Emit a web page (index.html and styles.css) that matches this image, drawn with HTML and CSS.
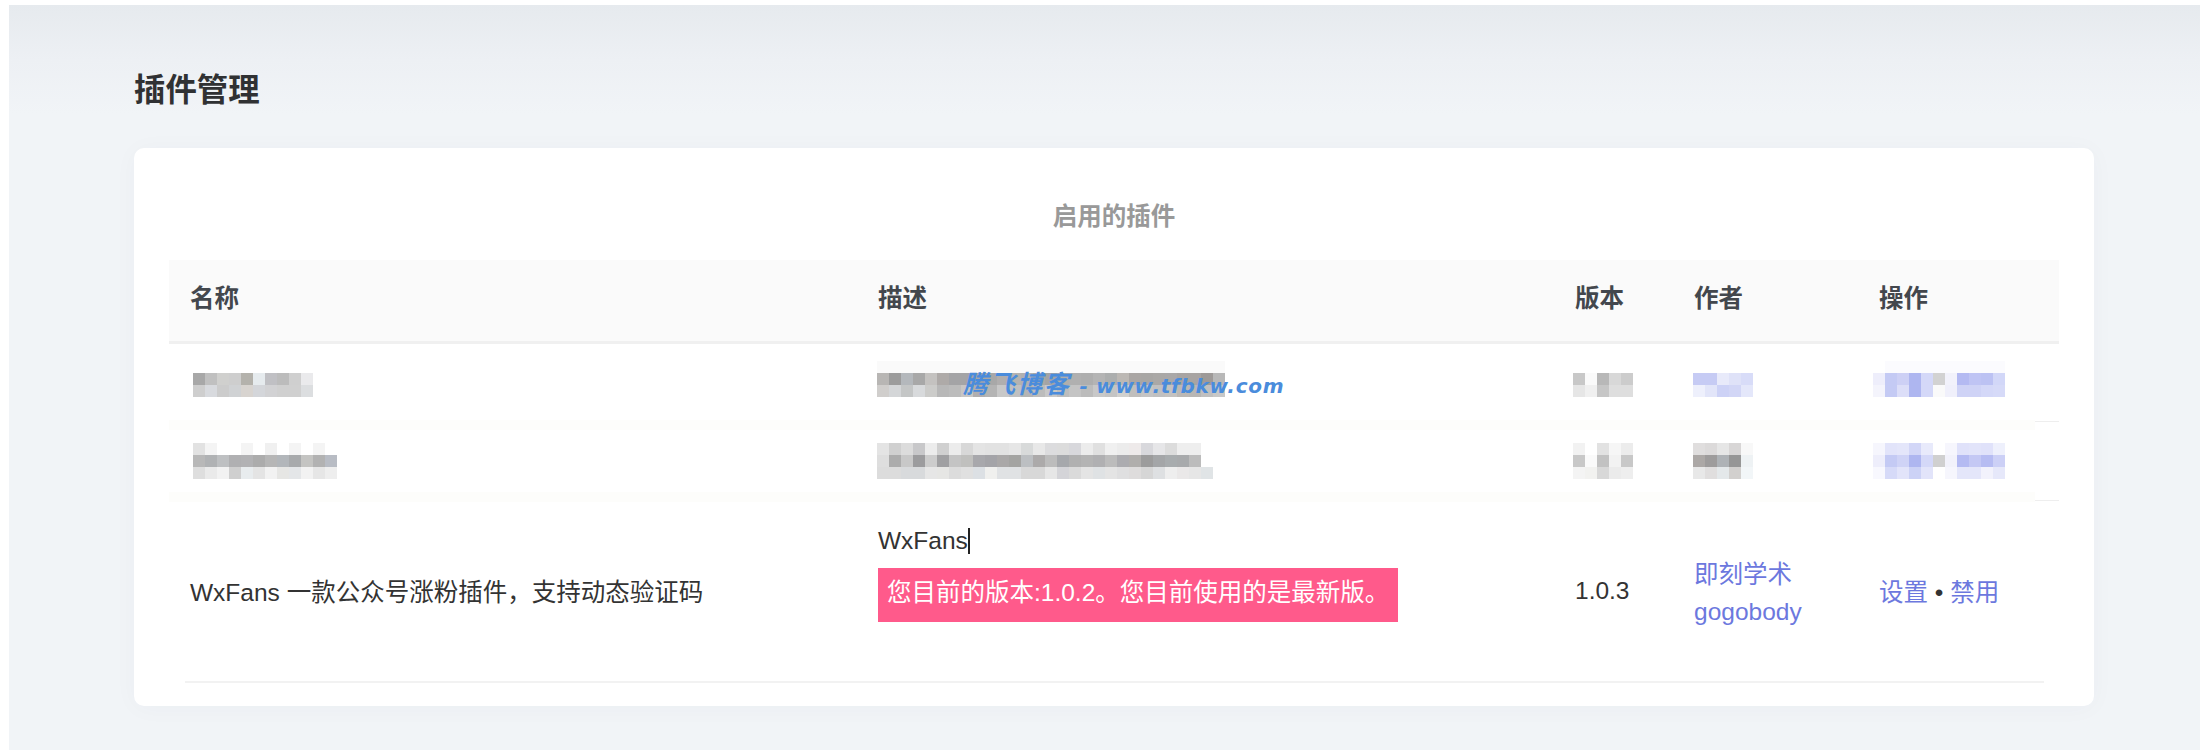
FILE: index.html
```html
<!DOCTYPE html>
<html lang="zh-CN">
<head>
<meta charset="utf-8">
<title>插件管理</title>
<link rel="stylesheet" href="styles.css">
</head>
<body>
<main class="page">
  <h1 class="page-title">插件管理</h1>
  <section class="card">
    <div class="watermark"><span class="wm-cn">腾飞博客</span> <span class="wm-en">- www.tfbkw.com</span></div>
    <table class="plugins">
      <caption>启用的插件</caption>
      <colgroup>
        <col class="col-name"><col class="col-desc"><col class="col-ver"><col class="col-author"><col class="col-ops">
      </colgroup>
      <thead>
        <tr><th>名称</th><th>描述</th><th>版本</th><th>作者</th><th>操作</th></tr>
      </thead>
      <tbody>
        <tr class="row-one">
          <td><svg class="mosaic m-name" width="120" height="36" viewBox="0 0 10 3"><g transform="translate(0,1)"><rect x="0" width="1" height="1" fill="#a8a8a8"/><rect x="1" width="1" height="1" fill="#c0c0c0"/><rect x="2" width="1" height="1" fill="#d0d0ce"/><rect x="3" width="1" height="1" fill="#cecece"/><rect x="4" width="1" height="1" fill="#b4b2ac"/><rect x="5" width="1" height="1" fill="#e6ebee"/><rect x="6" width="1" height="1" fill="#c0c0c4"/><rect x="7" width="1" height="1" fill="#bcbcbc"/><rect x="8" width="1" height="1" fill="#cfcfcf"/><rect x="9" width="1" height="1" fill="#eaeaec"/></g><g transform="translate(0,2)"><rect x="0" width="1" height="1" fill="#cecece"/><rect x="1" width="1" height="1" fill="#d8dade"/><rect x="2" width="1" height="1" fill="#cccccc"/><rect x="3" width="1" height="1" fill="#d0d2d4"/><rect x="4" width="1" height="1" fill="#d8d4d0"/><rect x="5" width="1" height="1" fill="#d4d6da"/><rect x="6" width="1" height="1" fill="#d2d2d4"/><rect x="7" width="1" height="1" fill="#d0d0d0"/><rect x="8" width="1" height="1" fill="#d0d0d0"/><rect x="9" width="1" height="1" fill="#dcdee0"/></g></svg></td>
          <td><svg class="mosaic m-desc" width="348" height="36" viewBox="0 0 29 3"><rect width="29" height="1" fill="#fafafa"/><g transform="translate(0,1)"><rect x="0" width="1" height="1" fill="#b8b6b4"/><rect x="1" width="1" height="1" fill="#9c9c9c"/><rect x="2" width="1" height="1" fill="#b4b8bc"/><rect x="3" width="1" height="1" fill="#a8a8a8"/><rect x="4" width="1" height="1" fill="#c4c2c0"/><rect x="5" width="1" height="1" fill="#aeaaa8"/><rect x="6" width="1" height="1" fill="#a4a4a6"/><rect x="7" width="1" height="1" fill="#a4a4a6"/><rect x="8" width="1" height="1" fill="#a8a6a6"/><rect x="9" width="1" height="1" fill="#a8a8a8"/><rect x="10" width="1" height="1" fill="#b0aeae"/><rect x="11" width="1" height="1" fill="#b4b2b0"/><rect x="12" width="1" height="1" fill="#b0b0b0"/><rect x="13" width="1" height="1" fill="#a8a8a8"/><rect x="14" width="1" height="1" fill="#a4a4a4"/><rect x="15" width="1" height="1" fill="#b0aeac"/><rect x="16" width="1" height="1" fill="#b0b0b0"/><rect x="17" width="1" height="1" fill="#aeaeae"/><rect x="18" width="1" height="1" fill="#b4b4b4"/><rect x="19" width="1" height="1" fill="#acaeae"/><rect x="20" width="1" height="1" fill="#bcb8b4"/><rect x="21" width="1" height="1" fill="#aaa6a4"/><rect x="22" width="1" height="1" fill="#a8a6a4"/><rect x="23" width="1" height="1" fill="#aaa8a6"/><rect x="24" width="1" height="1" fill="#aaa8a8"/><rect x="25" width="1" height="1" fill="#a8a4a2"/><rect x="26" width="1" height="1" fill="#a8a4a2"/><rect x="27" width="1" height="1" fill="#9e9a98"/><rect x="28" width="1" height="1" fill="#b8b8b8"/></g><g transform="translate(0,2)"><rect x="0" width="1" height="1" fill="#d0cecc"/><rect x="1" width="1" height="1" fill="#d4d6d8"/><rect x="2" width="1" height="1" fill="#c4c6c6"/><rect x="3" width="1" height="1" fill="#d8dadc"/><rect x="4" width="1" height="1" fill="#ccccca"/><rect x="5" width="1" height="1" fill="#b8b8b8"/><rect x="6" width="1" height="1" fill="#bcbcbc"/><rect x="7" width="1" height="1" fill="#c8c6c4"/><rect x="8" width="1" height="1" fill="#b0aeae"/><rect x="9" width="1" height="1" fill="#b4b4b4"/><rect x="10" width="1" height="1" fill="#c8c8c8"/><rect x="11" width="1" height="1" fill="#c0c0c0"/><rect x="12" width="1" height="1" fill="#b4b4b4"/><rect x="13" width="1" height="1" fill="#bcbcbc"/><rect x="14" width="1" height="1" fill="#c8c8c8"/><rect x="15" width="1" height="1" fill="#bdbdbd"/><rect x="16" width="1" height="1" fill="#c4c4c4"/><rect x="17" width="1" height="1" fill="#bcbcbc"/><rect x="18" width="1" height="1" fill="#c8c8c8"/><rect x="19" width="1" height="1" fill="#c4c4c4"/><rect x="20" width="1" height="1" fill="#d0d0ce"/><rect x="21" width="1" height="1" fill="#c0bebc"/><rect x="22" width="1" height="1" fill="#c4c4c4"/><rect x="23" width="1" height="1" fill="#c0c0c0"/><rect x="24" width="1" height="1" fill="#c4c2c0"/><rect x="25" width="1" height="1" fill="#bcb8b4"/><rect x="26" width="1" height="1" fill="#b8b6b4"/><rect x="27" width="1" height="1" fill="#c0c0c0"/><rect x="28" width="1" height="1" fill="#c8c8c8"/></g></svg></td>
          <td><svg class="mosaic m-ver" width="60" height="36" viewBox="0 0 5 3"><g transform="translate(0,1)"><rect x="0" width="1" height="1" fill="#c8c8c8"/><rect x="1" width="1" height="1" fill="#fafafa"/><rect x="2" width="1" height="1" fill="#b8b8b8"/><rect x="3" width="1" height="1" fill="#d8d8d8"/><rect x="4" width="1" height="1" fill="#cccccc"/></g><g transform="translate(0,2)"><rect x="0" width="1" height="1" fill="#e6e6e6"/><rect x="1" width="1" height="1" fill="#f0f0f0"/><rect x="2" width="1" height="1" fill="#c6c6c6"/><rect x="3" width="1" height="1" fill="#dedede"/><rect x="4" width="1" height="1" fill="#dedede"/></g></svg></td>
          <td><svg class="mosaic m-author" width="60" height="36" viewBox="0 0 5 3"><g transform="translate(0,1)"><rect x="0" width="1" height="1" fill="#c6cbf4"/><rect x="1" width="1" height="1" fill="#c6cbf4"/><rect x="2" width="1" height="1" fill="#e8eafa"/><rect x="3" width="1" height="1" fill="#dfe2f8"/><rect x="4" width="1" height="1" fill="#d8dcf8"/></g><g transform="translate(0,2)"><rect x="0" width="1" height="1" fill="#eef0fc"/><rect x="1" width="1" height="1" fill="#e2e5f9"/><rect x="2" width="1" height="1" fill="#cdd2f6"/><rect x="3" width="1" height="1" fill="#d2d6f6"/><rect x="4" width="1" height="1" fill="#e4e7fa"/></g></svg></td>
          <td><svg class="mosaic m-ops" width="132" height="36" viewBox="0 0 11 3"><rect x="1" width="10" height="1" fill="#fbfbfe"/><g transform="translate(0,1)"><rect x="0" width="1" height="1" fill="#eeeefb"/><rect x="1" width="1" height="1" fill="#c4caf4"/><rect x="2" width="1" height="1" fill="#cdd0f5"/><rect x="3" width="1" height="1" fill="#aeb6f0"/><rect x="4" width="1" height="1" fill="#d4d8f8"/><rect x="5" width="1" height="1" fill="#d2d2d2"/><rect x="6" width="1" height="1" fill="#f2f2fb"/><rect x="7" width="1" height="1" fill="#b4baf2"/><rect x="8" width="1" height="1" fill="#bfc4f4"/><rect x="9" width="1" height="1" fill="#bcc2f3"/><rect x="10" width="1" height="1" fill="#d2d7f8"/></g><g transform="translate(0,2)"><rect x="0" width="1" height="1" fill="#f4f4fc"/><rect x="1" width="1" height="1" fill="#c4caf4"/><rect x="2" width="1" height="1" fill="#dcdef8"/><rect x="3" width="1" height="1" fill="#aeb6f0"/><rect x="4" width="1" height="1" fill="#d4d8f8"/><rect x="5" width="1" height="1" fill="#fafafa"/><rect x="6" width="1" height="1" fill="#f0f0fb"/><rect x="7" width="1" height="1" fill="#cfd3f6"/><rect x="8" width="1" height="1" fill="#cfd3f6"/><rect x="9" width="1" height="1" fill="#d4d8f8"/><rect x="10" width="1" height="1" fill="#d6daf8"/></g></svg></td>
        </tr>
        <tr class="band band-first"><td colspan="5"></td></tr>
        <tr class="row-two">
          <td><svg class="mosaic m-name" width="144" height="36" viewBox="0 0 12 3"><rect x="0" width="1" height="1" fill="#e2e2e2"/><rect x="1" width="1" height="1" fill="#f4f4f4"/><rect x="4" width="1" height="1" fill="#f4f4f4"/><rect x="6" width="1" height="1" fill="#f0f0f0"/><rect x="8" width="1" height="1" fill="#f4f4f4"/><rect x="10" width="1" height="1" fill="#f4f4f4"/><g transform="translate(0,1)"><rect x="0" width="1" height="1" fill="#b8b8b8"/><rect x="1" width="1" height="1" fill="#b0b2b4"/><rect x="2" width="1" height="1" fill="#bec0c2"/><rect x="3" width="1" height="1" fill="#b0b0b2"/><rect x="4" width="1" height="1" fill="#b2b2b4"/><rect x="5" width="1" height="1" fill="#acacac"/><rect x="6" width="1" height="1" fill="#b6b6b6"/><rect x="7" width="1" height="1" fill="#b2b6ba"/><rect x="8" width="1" height="1" fill="#a8aaac"/><rect x="9" width="1" height="1" fill="#c4c4c2"/><rect x="10" width="1" height="1" fill="#b2b2b2"/><rect x="11" width="1" height="1" fill="#b8bcc4"/></g><g transform="translate(0,2)"><rect x="0" width="1" height="1" fill="#dedede"/><rect x="1" width="1" height="1" fill="#eaeaea"/><rect x="2" width="1" height="1" fill="#f2f2f2"/><rect x="3" width="1" height="1" fill="#cfcfcf"/><rect x="4" width="1" height="1" fill="#e8ecee"/><rect x="5" width="1" height="1" fill="#e4e4e4"/><rect x="6" width="1" height="1" fill="#f2f2f2"/><rect x="7" width="1" height="1" fill="#e6e6e4"/><rect x="8" width="1" height="1" fill="#e4e6e8"/><rect x="9" width="1" height="1" fill="#f2f2f2"/><rect x="10" width="1" height="1" fill="#e6e6e6"/><rect x="11" width="1" height="1" fill="#eeeeee"/></g></svg></td>
          <td><svg class="mosaic m-desc" width="336" height="36" viewBox="0 0 28 3"><rect x="0" width="1" height="1" fill="#e4e4e4"/><rect x="1" width="1" height="1" fill="#d0d0d0"/><rect x="2" width="1" height="1" fill="#dcdcdc"/><rect x="3" width="1" height="1" fill="#c8c8ca"/><rect x="4" width="1" height="1" fill="#ececec"/><rect x="5" width="1" height="1" fill="#d0d0d0"/><rect x="6" width="1" height="1" fill="#ececec"/><rect x="7" width="1" height="1" fill="#d8d8d8"/><rect x="8" width="1" height="1" fill="#e4e4e4"/><rect x="9" width="1" height="1" fill="#e2e2e2"/><rect x="10" width="1" height="1" fill="#e2e2e2"/><rect x="11" width="1" height="1" fill="#e6e6e6"/><rect x="12" width="1" height="1" fill="#d8dada"/><rect x="13" width="1" height="1" fill="#e8e8e8"/><rect x="14" width="1" height="1" fill="#dcdcde"/><rect x="15" width="1" height="1" fill="#dcdcdc"/><rect x="16" width="1" height="1" fill="#d8d8dc"/><rect x="17" width="1" height="1" fill="#ececec"/><rect x="18" width="1" height="1" fill="#e0e0e0"/><rect x="19" width="1" height="1" fill="#f0f0f0"/><rect x="20" width="1" height="1" fill="#ececec"/><rect x="21" width="1" height="1" fill="#eeeaea"/><rect x="22" width="1" height="1" fill="#d8d8dc"/><rect x="23" width="1" height="1" fill="#e6e6e8"/><rect x="24" width="1" height="1" fill="#dcdcdc"/><rect x="25" width="1" height="1" fill="#eeeeee"/><rect x="26" width="1" height="1" fill="#eeeeee"/><g transform="translate(0,1)"><rect x="0" width="1" height="1" fill="#dedede"/><rect x="1" width="1" height="1" fill="#acacac"/><rect x="2" width="1" height="1" fill="#c8c8c8"/><rect x="3" width="1" height="1" fill="#9c9c9e"/><rect x="4" width="1" height="1" fill="#cccccc"/><rect x="5" width="1" height="1" fill="#a0a0a2"/><rect x="6" width="1" height="1" fill="#c4c4c4"/><rect x="7" width="1" height="1" fill="#c0c0be"/><rect x="8" width="1" height="1" fill="#a8a8ac"/><rect x="9" width="1" height="1" fill="#a4a4a8"/><rect x="10" width="1" height="1" fill="#aaa8a8"/><rect x="11" width="1" height="1" fill="#a4a4a2"/><rect x="12" width="1" height="1" fill="#bcbfc2"/><rect x="13" width="1" height="1" fill="#acaaaa"/><rect x="14" width="1" height="1" fill="#bcbcbc"/><rect x="15" width="1" height="1" fill="#a6a8ac"/><rect x="16" width="1" height="1" fill="#b0b0b0"/><rect x="17" width="1" height="1" fill="#b4b4b4"/><rect x="18" width="1" height="1" fill="#b0b0b2"/><rect x="19" width="1" height="1" fill="#bcbcbc"/><rect x="20" width="1" height="1" fill="#acacb0"/><rect x="21" width="1" height="1" fill="#b0aeac"/><rect x="22" width="1" height="1" fill="#9c9c9c"/><rect x="23" width="1" height="1" fill="#a4a6a8"/><rect x="24" width="1" height="1" fill="#a8acae"/><rect x="25" width="1" height="1" fill="#a8aaac"/><rect x="26" width="1" height="1" fill="#bcbcbc"/></g><g transform="translate(0,2)"><rect x="0" width="1" height="1" fill="#dcdcdc"/><rect x="1" width="1" height="1" fill="#dcdcdc"/><rect x="2" width="1" height="1" fill="#d8dadc"/><rect x="3" width="1" height="1" fill="#d8dadc"/><rect x="4" width="1" height="1" fill="#e6e6e6"/><rect x="5" width="1" height="1" fill="#e6e6e4"/><rect x="6" width="1" height="1" fill="#dcdcdc"/><rect x="7" width="1" height="1" fill="#e0e0e0"/><rect x="8" width="1" height="1" fill="#dce0e4"/><rect x="9" width="1" height="1" fill="#f0f0ee"/><rect x="10" width="1" height="1" fill="#e0e2e4"/><rect x="11" width="1" height="1" fill="#e0e2e4"/><rect x="12" width="1" height="1" fill="#d8d8d8"/><rect x="13" width="1" height="1" fill="#d8d8d8"/><rect x="14" width="1" height="1" fill="#e6e6e6"/><rect x="15" width="1" height="1" fill="#d4d4d8"/><rect x="16" width="1" height="1" fill="#dadada"/><rect x="17" width="1" height="1" fill="#e4e4e4"/><rect x="18" width="1" height="1" fill="#dfe2e4"/><rect x="19" width="1" height="1" fill="#e4e4e4"/><rect x="20" width="1" height="1" fill="#dfdfe0"/><rect x="21" width="1" height="1" fill="#dedcdc"/><rect x="22" width="1" height="1" fill="#d6d6d6"/><rect x="23" width="1" height="1" fill="#dee0e2"/><rect x="24" width="1" height="1" fill="#eeeeee"/><rect x="25" width="1" height="1" fill="#eae8e8"/><rect x="26" width="1" height="1" fill="#e6e6e6"/><rect x="27" width="1" height="1" fill="#e0e4e6"/></g></svg></td>
          <td><svg class="mosaic m-ver" width="60" height="36" viewBox="0 0 5 3"><rect x="0" width="1" height="1" fill="#f2f2f2"/><rect x="2" width="1" height="1" fill="#e2e2e2"/><rect x="3" width="1" height="1" fill="#f6f6f6"/><rect x="4" width="1" height="1" fill="#ececec"/><g transform="translate(0,1)"><rect x="0" width="1" height="1" fill="#c8c8c8"/><rect x="1" width="1" height="1" fill="#fafafa"/><rect x="2" width="1" height="1" fill="#c2c2c2"/><rect x="3" width="1" height="1" fill="#f2f2f2"/><rect x="4" width="1" height="1" fill="#c8c8c8"/></g><g transform="translate(0,2)"><rect x="0" width="1" height="1" fill="#f4f4f4"/><rect x="1" width="1" height="1" fill="#f2f2f0"/><rect x="2" width="1" height="1" fill="#d8d8d8"/><rect x="3" width="1" height="1" fill="#ebebeb"/><rect x="4" width="1" height="1" fill="#eeeeee"/></g></svg></td>
          <td><svg class="mosaic m-author" width="60" height="36" viewBox="0 0 5 3"><rect x="0" width="1" height="1" fill="#e0dede"/><rect x="1" width="1" height="1" fill="#dcdada"/><rect x="2" width="1" height="1" fill="#e6e6e6"/><rect x="3" width="1" height="1" fill="#d8d6d6"/><rect x="4" width="1" height="1" fill="#f8f8f8"/><g transform="translate(0,1)"><rect x="0" width="1" height="1" fill="#aca8a6"/><rect x="1" width="1" height="1" fill="#9e9c9c"/><rect x="2" width="1" height="1" fill="#aeb2b6"/><rect x="3" width="1" height="1" fill="#969696"/><rect x="4" width="1" height="1" fill="#eef2f4"/></g><g transform="translate(0,2)"><rect x="0" width="1" height="1" fill="#e8e8e8"/><rect x="1" width="1" height="1" fill="#e0dede"/><rect x="2" width="1" height="1" fill="#e4e8ea"/><rect x="3" width="1" height="1" fill="#d2d0ce"/><rect x="4" width="1" height="1" fill="#f2f6f8"/></g></svg></td>
          <td><svg class="mosaic m-ops" width="132" height="36" viewBox="0 0 11 3"><rect x="0" width="1" height="1" fill="#f6f6fd"/><rect x="1" width="1" height="1" fill="#e2e4fa"/><rect x="2" width="1" height="1" fill="#e4e6fa"/><rect x="3" width="1" height="1" fill="#d2d6f7"/><rect x="4" width="1" height="1" fill="#e8eafb"/><rect x="6" width="1" height="1" fill="#f6f6fd"/><rect x="7" width="1" height="1" fill="#e0e2fa"/><rect x="8" width="1" height="1" fill="#e2e4fa"/><rect x="9" width="1" height="1" fill="#e0e2fa"/><rect x="10" width="1" height="1" fill="#eef0fc"/><g transform="translate(0,1)"><rect x="0" width="1" height="1" fill="#eeeefb"/><rect x="1" width="1" height="1" fill="#c4caf4"/><rect x="2" width="1" height="1" fill="#cfd3f6"/><rect x="3" width="1" height="1" fill="#aeb6f0"/><rect x="4" width="1" height="1" fill="#d4d8f8"/><rect x="5" width="1" height="1" fill="#d0d0d0"/><rect x="6" width="1" height="1" fill="#f2f2fb"/><rect x="7" width="1" height="1" fill="#b4baf2"/><rect x="8" width="1" height="1" fill="#c4c8f4"/><rect x="9" width="1" height="1" fill="#b6bcf2"/><rect x="10" width="1" height="1" fill="#ccd0f6"/></g><g transform="translate(0,2)"><rect x="0" width="1" height="1" fill="#f8f8fe"/><rect x="1" width="1" height="1" fill="#d6daf8"/><rect x="2" width="1" height="1" fill="#e2e4fa"/><rect x="3" width="1" height="1" fill="#ccd2f6"/><rect x="4" width="1" height="1" fill="#e2e4fa"/><rect x="6" width="1" height="1" fill="#f6f6fd"/><rect x="7" width="1" height="1" fill="#e4e6fa"/><rect x="8" width="1" height="1" fill="#e4e6fa"/><rect x="9" width="1" height="1" fill="#f2f2fc"/><rect x="10" width="1" height="1" fill="#e6e8fa"/></g></svg></td>
        </tr>
        <tr class="band band-second"><td colspan="5"></td></tr>
        <tr class="row-three">
          <td>WxFans 一款公众号涨粉插件，支持动态验证码</td>
          <td class="desc-cell">
            <p class="desc-name">WxFans<span class="caret"></span></p>
            <p class="notice">您目前的版本:1.0.2。您目前使用的是最新版。</p>
          </td>
          <td>1.0.3</td>
          <td class="author-cell"><a href="#">即刻学术</a><br><a href="#">gogobody</a></td>
          <td><a href="#">设置</a> • <a href="#">禁用</a></td>
        </tr>
        <tr class="tail"><td colspan="5"></td></tr>
      </tbody>
    </table>
  </section>
</main>
</body>
</html>
```

FILE: styles.css
```css
* { box-sizing: border-box; }
html, body { margin: 0; padding: 0; background: #fff; height: 750px; overflow: hidden; }
body {
  padding: 5px 0 0 9px;
  font-family: "Liberation Sans", "Noto Sans CJK SC", sans-serif;
  font-size: 24.5px;
  color: #333;
}
a { color: #6c78de; text-decoration: none; }

.page {
  height: 745px;
  padding: 64px 106px 44px 125px;
  background: linear-gradient(#e6eaee 0, #edf0f4 55px, #f1f4f7 110px);
}
.page-title {
  margin: 0 0 35px;
  font-size: 31.4px;
  line-height: 44px;
  font-weight: 700;
  color: #303133;
}
.card {
  position: relative;
  height: 558px;
  padding: 35px 35px 0;
  background: #fff;
  border-radius: 10px;
  box-shadow: 0 2px 24px rgba(40, 60, 90, .03);
}
.watermark {
  position: absolute;
  z-index: 2;
  left: 829px;
  top: 223px;
  font-family: "DejaVu Sans", "Noto Sans CJK SC", sans-serif;
  line-height: 28px;
  font-weight: 700;
  font-style: italic;
  white-space: nowrap;
  color: #4a8cdc;
}
.wm-cn { font-size: 25px; letter-spacing: 2px; }
.wm-en { font-size: 20px; letter-spacing: .7px; }

.plugins {
  width: 1890px;
  table-layout: fixed;
  border-collapse: collapse;
}
.plugins caption {
  padding: 17px 0 26px;
  line-height: 34px;
  font-weight: 700;
  color: #999;
}
.col-name { width: 688px; }
.col-desc { width: 697px; }
.col-ver { width: 119px; }
.col-author { width: 185px; }
.col-ops { width: 201px; }

.plugins th {
  height: 82px;
  padding: 0 0 8px 21px;
  text-align: left;
  font-weight: 700;
  color: #43474d;
  background: #fafafa;
  border-bottom: 3px solid #f0f0f0;
}
.plugins td { padding: 0 0 0 21px; }

.mosaic { display: block; filter: blur(.5px); }
.m-name { margin-left: 3px; }
.m-desc { margin-left: -1px; }
.m-ver { margin-left: -2px; }
.m-author { margin-left: -1px; }
.m-ops { margin-left: -6px; }

.row-one td { height: 78px; padding-top: 17px; vertical-align: top; }
.row-two td { height: 62px; padding-top: 13px; vertical-align: top; }

.band td {
  height: 10px;
  padding: 0;
  background-color: transparent;
  background-repeat: no-repeat;
}
.band-first td {
  background-image: linear-gradient(#eee, #eee), linear-gradient(#fdfdfb, #fdfdfb);
  background-size: 24px 1px, 1866px 10px;
  background-position: right 0 top 1px, left 0 top 0;
}
.band-second td {
  background-image: linear-gradient(#eee, #eee), linear-gradient(#fdfdfb, #fdfdfb);
  background-size: 24px 1px, 1866px 10px;
  background-position: right 0 top 8px, left 0 top 0;
}

.row-three td { height: 179px; padding-bottom: 2px; vertical-align: middle; }
.row-three .desc-cell { vertical-align: top; padding-top: 24px; }
.desc-name {
  display: flex;
  align-items: center;
  margin: 0 0 13px;
  height: 29px;
  line-height: 29px;
  color: #333;
}
.caret {
  width: 2px;
  height: 26px;
  background: #222;
}
.notice {
  width: fit-content;
  margin: 0;
  padding: 0 9px;
  height: 54px;
  line-height: 50px;
  color: #fff;
  background: #ff5a8b;
}
.row-three .author-cell { line-height: 37px; padding-top: 4px; }

.tail td {
  height: 4px;
  padding: 0;
  background: linear-gradient(#f2f2f2, #f2f2f2) center top / 1859px 2px no-repeat;
}
```
